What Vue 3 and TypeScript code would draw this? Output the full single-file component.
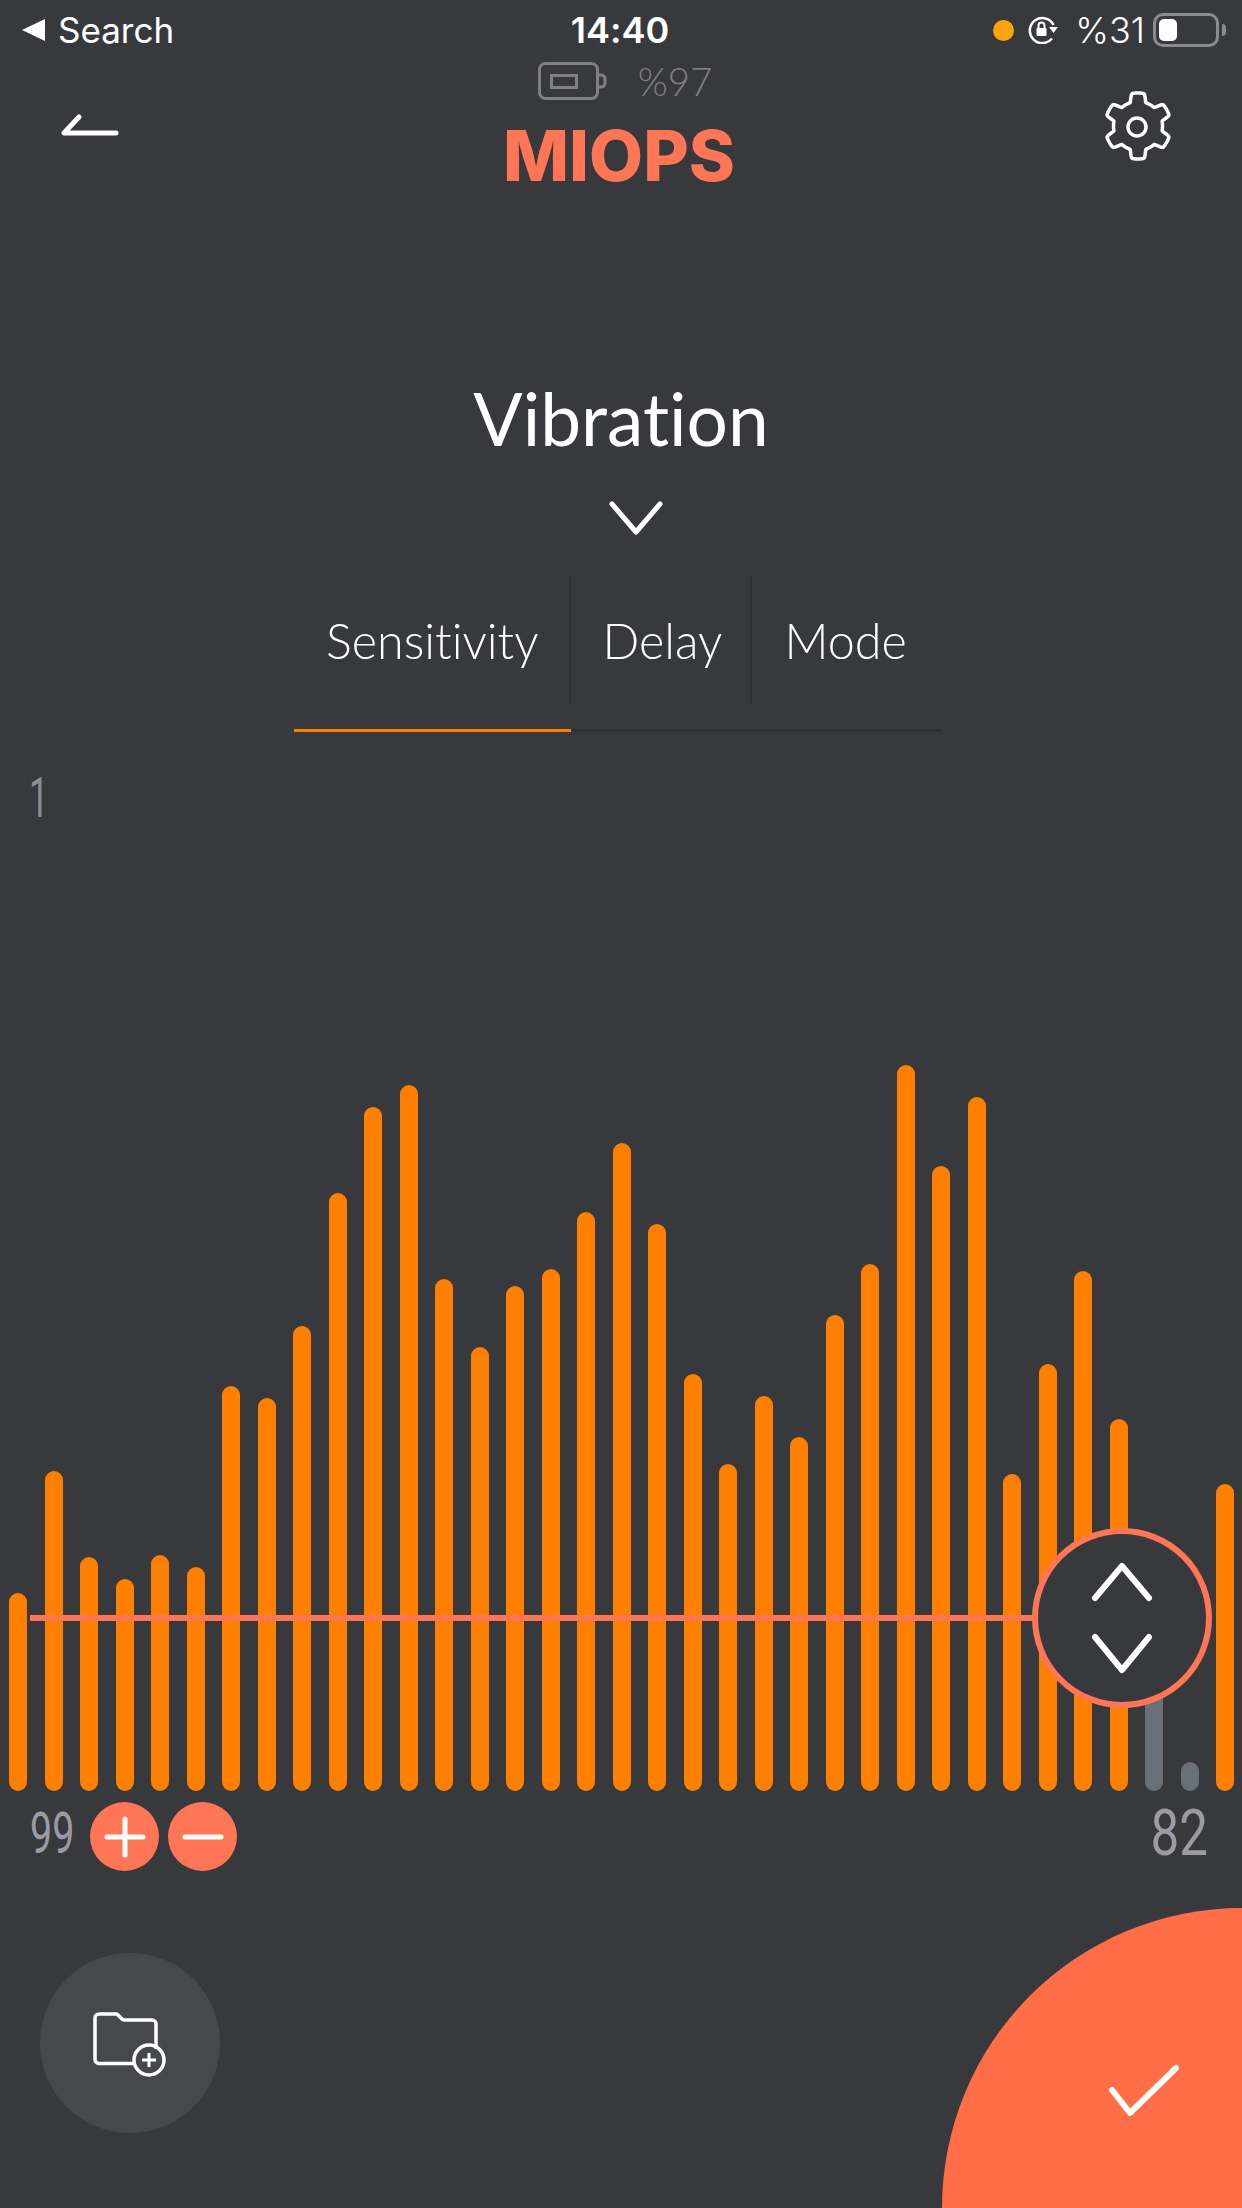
<script setup lang="ts">
const tops = [
  1593, 1471, 1557, 1579, 1555, 1567, 1386, 1398, 1326, 1193, 1107, 1085,
  1279, 1347, 1286, 1269, 1212, 1143, 1224, 1374, 1464, 1396, 1437, 1315,
  1264, 1065, 1166, 1097, 1474, 1364, 1271, 1419, 1680, 1762, 1484,
]
const chartBottom = 1791
const idleBars = [32, 33]

const bars = tops.map((top, i) => ({
  height: chartBottom - top,
  idle: idleBars.includes(i),
}))

function smoothstep(lo: number, hi: number, v: number): number {
  const t = Math.min(1, Math.max(0, (v - lo) / (hi - lo)))
  return t * t * (3 - 2 * t)
}

// six lobed cog, lobe on top
function gearPath(cx: number, cy: number): string {
  const outer = 33
  const inner = 24.5
  const steps = 240
  const pts: string[] = []
  for (let i = 0; i < steps; i++) {
    const a = (i / steps) * Math.PI * 2
    const r = inner + (outer - inner) * smoothstep(-0.45, 0.55, Math.cos(a * 6))
    const x = cx + r * Math.sin(a)
    const y = cy - r * Math.cos(a)
    pts.push(`${x.toFixed(1)} ${y.toFixed(1)}`)
  }
  return `M${pts.join('L')}Z`
}
const gear = gearPath(36, 36)
</script>

<template>
  <div class="screen">
    <div class="status">
      <div class="status__left">
        <svg width="23" height="22" viewBox="0 0 23 22"><path d="M23 0v22L0 11z" fill="#fff" /></svg>
        <span>Search</span>
      </div>
      <div class="status__time">14:40</div>
      <div class="status__right">
        <span class="status__dot"></span>
        <svg width="31" height="28" viewBox="0 0 31 28" fill="none">
          <path d="M24 22.500A12.500 12.500 0 1 1 25.500 9" stroke="#fff" stroke-width="2.500" />
          <path d="M21 11h9l-4.500 6z" fill="#fff" />
          <rect x="8.500" y="12" width="10" height="8" rx="1" fill="#fff" />
          <path d="M10.500 12V9.500a3 3 0 0 1 6 0V12" stroke="#fff" stroke-width="2" />
        </svg>
        <span class="status__pct">%31</span>
        <div class="status__battery"><i></i></div>
        <span class="status__nub"></span>
      </div>
    </div>

    <div class="header">
      <svg class="header__back" width="60" height="26" viewBox="0 0 60 26" fill="none">
        <path d="M19 3L4 19h52" stroke="#fff" stroke-width="5" stroke-linecap="round" stroke-linejoin="round" />
      </svg>
      <div class="header__center">
        <div class="device">
          <svg width="69" height="38" viewBox="0 0 69 38" fill="none" stroke="#808080" stroke-width="3">
            <rect x="1.500" y="1.500" width="58" height="35" rx="6" />
            <rect x="13.500" y="13.500" width="25" height="12" />
            <path d="M60 13h3a4 4 0 0 1 4 4v4a4 4 0 0 1-4 4h-3" />
          </svg>
          <span>%97</span>
        </div>
        <div class="logo">MIOPS</div>
      </div>
      <svg class="header__gear" width="72" height="72" viewBox="0 0 72 72" fill="none" stroke="#fff" stroke-width="3.500">
        <path :d="gear" stroke-linejoin="round" />
        <circle cx="35" cy="37" r="9" />
      </svg>
    </div>

    <h1 class="title">Vibration</h1>
    <svg class="title__chevron" width="56" height="36" viewBox="0 0 56 36" fill="none">
      <path d="M4 4l24 28L52 4" stroke="#fff" stroke-width="5" stroke-linecap="round" stroke-linejoin="round" />
    </svg>

    <div class="tabs">
      <div class="tab tab--active">Sensitivity</div>
      <div class="tab">Delay</div>
      <div class="tab">Mode</div>
    </div>

    <div class="axis-top">1</div>

    <div class="chart">
      <div
        v-for="(bar, i) in bars"
        :key="i"
        class="bar"
        :class="{ 'bar--idle': bar.idle }"
        :style="{ height: bar.height + 'px' }"
      ></div>
      <div class="slider-line"></div>
      <div class="knob">
        <svg width="70" height="120" viewBox="0 0 70 120" fill="none" stroke="#fff" stroke-width="6" stroke-linecap="round" stroke-linejoin="round">
          <path d="M8 40L35 8l27 32" />
          <path d="M8 79l27 33 27-33" />
        </svg>
      </div>
    </div>

    <div class="axis">
      <div class="axis__left">
        <span class="num num--small">99</span>
        <button class="round-btn">
          <svg width="44" height="44" viewBox="0 0 44 44" stroke="#fff" stroke-width="5" stroke-linecap="round">
            <path d="M22 4v36M4 22h36" />
          </svg>
        </button>
        <button class="round-btn">
          <svg width="44" height="44" viewBox="0 0 44 44" stroke="#fff" stroke-width="5" stroke-linecap="round">
            <path d="M4 22h36" />
          </svg>
        </button>
      </div>
      <span class="num">82</span>
    </div>

    <div class="footer">
      <button class="folder-btn">
        <svg width="74" height="66" viewBox="0 0 74 66" fill="none" stroke="#fff">
          <path d="M40 51.500H6a4 4 0 0 1-4-4V6a4 4 0 0 1 4-4h17a3 3 0 0 1 2 1l4 4a3 3 0 0 0 2 1h28a4 4 0 0 1 4 4v25" stroke-width="3.500" />
          <circle cx="56" cy="48" r="15" stroke-width="3.500" />
          <path d="M56 41v14M49 48h14" stroke-width="3" />
        </svg>
      </button>
      <div class="confirm">
        <svg width="76" height="58" viewBox="0 0 76 58" fill="none">
          <path d="M5 26l18 23L69 4" stroke="#fff" stroke-width="6" stroke-linecap="round" stroke-linejoin="round" />
        </svg>
      </div>
    </div>
  </div>
</template>

<style scoped>
.screen {
  width: 1242px;
  height: 2208px;
  background: #38393d;
  display: flex;
  flex-direction: column;
  overflow: hidden;
  font-family: Lato, "Noto Sans", sans-serif;
  font-variant-ligatures: none;
  color: #fff;
}

.status {
  height: 60px;
  display: grid;
  grid-template-columns: 1fr auto 1fr;
  align-items: center;
  padding: 0 16px 0 22px;
  font-family: Inter, "Liberation Sans", sans-serif;
  font-size: 35px;
}
.status__left {
  display: flex;
  align-items: center;
  gap: 13px;
}
.status__time {
  font-weight: 600;
  font-size: 36px;
  margin-right: 8px;
}
.status__right {
  display: flex;
  align-items: center;
  justify-content: flex-end;
}
.status__dot {
  width: 21px;
  height: 21px;
  border-radius: 50%;
  background: #ffa30d;
  margin-right: 14px;
}
.status__pct {
  margin: 0 8px 0 16px;
  font-size: 36px;
  font-weight: 300;
}
.status__battery {
  width: 66px;
  height: 34px;
  box-sizing: border-box;
  border: 3px solid #8b8c8e;
  border-radius: 10px;
  padding: 3px;
}
.status__battery i {
  display: block;
  width: 18px;
  height: 22px;
  background: #fff;
  border-radius: 5px;
}
.status__nub {
  width: 4px;
  height: 12px;
  margin-left: 3px;
  background: #8b8c8e;
  border-radius: 0 6px 6px 0;
}

.header {
  height: 130px;
  display: flex;
  justify-content: space-between;
  align-items: flex-start;
  padding: 0 68px 0 60px;
}
.header__back {
  margin-top: 54px;
}
.header__gear {
  margin-top: 30px;
}
.header__center {
  display: flex;
  flex-direction: column;
  align-items: center;
  margin-left: 16px;
}
.device {
  display: flex;
  align-items: center;
  gap: 31px;
  height: 42px;
  margin-left: 12px;
  color: #7f7f83;
  font-size: 38.5px;
  font-weight: 300;
}
.logo {
  font-family: Inter, Lato, sans-serif;
  font-size: 70px;
  font-weight: 800;
  line-height: 72px;
  margin-top: 18px;
  color: #ff7656;
}

.title {
  margin: 186px 0 0;
  text-align: center;
  font-size: 73px;
  font-weight: 400;
  line-height: 84px;
}
.title__chevron {
  display: block;
  margin: 40px 0 0 608px;
}

.tabs {
  display: flex;
  align-self: flex-start;
  margin: 40px 0 0 294px;
  width: 648px;
  border-bottom: 3px solid #2f3034;
  height: 153px;
  font-size: 48.5px;
  font-weight: 300;
}
.tab {
  height: 128px;
  padding: 0 28px 0 32px;
  display: flex;
  align-items: center;
  border-right: 2px solid #303135;
}
.tab:last-child {
  border-right: none;
}
.tab--active {
  position: relative;
  padding-right: 30px;
}
.tab--active::after {
  content: "";
  position: absolute;
  left: 0;
  right: -2px;
  top: 153px;
  height: 3px;
  background: #ff8000;
}

.axis-top {
  margin: 36px 0 0 29px;
  height: 60px;
  line-height: 60px;
  font-family: Roboto, sans-serif;
  font-size: 56px;
  color: #8e8e98;
  transform: scaleX(0.62);
  transform-origin: left center;
}

.chart {
  position: relative;
  height: 963px;
  display: flex;
  justify-content: space-between;
  align-items: flex-end;
  padding: 0 8px 0 9px;
}
.bar {
  width: 18px;
  background: #ff8000;
  border-radius: 9px;
}
.bar--idle {
  background: #687078;
}
.slider-line {
  position: absolute;
  left: 30px;
  width: 1010px;
  bottom: 170px;
  height: 6px;
  background: #ff7656;
}
.knob {
  position: absolute;
  left: 1032px;
  bottom: 83px;
  width: 180px;
  height: 180px;
  box-sizing: border-box;
  border: 6px solid #ff7656;
  border-radius: 50%;
  background: #38393d;
  display: flex;
  align-items: center;
  justify-content: center;
}

.axis {
  height: 117px;
  box-sizing: border-box;
  display: flex;
  justify-content: space-between;
  align-items: flex-start;
  padding: 11px 34px 0 30px;
}
.axis__left {
  display: flex;
  align-items: flex-start;
  gap: 9px;
}
.num {
  font-family: Roboto, sans-serif;
  font-size: 64px;
  line-height: 64px;
  color: #9b9aa5;
  margin-top: 0;
  transform: scaleX(0.8);
  transform-origin: right center;
}
.num--small {
  font-size: 58px;
  line-height: 58px;
  margin-top: 2px;
  width: 51px;
  transform: scaleX(0.68);
  transform-origin: left center;
}
.round-btn {
  width: 69px;
  height: 69px;
  border: none;
  padding: 0;
  border-radius: 50%;
  background: #ff7656;
  display: flex;
  align-items: center;
  justify-content: center;
}

.footer {
  height: 300px;
  display: flex;
  justify-content: space-between;
  align-items: flex-start;
  padding-left: 40px;
}
.folder-btn {
  width: 180px;
  height: 180px;
  margin-top: 45px;
  border: none;
  padding: 3px 0 0 0;
  border-radius: 50%;
  background: #47484c;
  display: flex;
  align-items: center;
  justify-content: center;
}
.confirm {
  width: 300px;
  height: 300px;
  background: #ff6e47;
  border-top-left-radius: 100%;
  box-sizing: border-box;
  padding: 156px 0 0 165px;
}
</style>

<style>
html,
body {
  margin: 0;
  background: #38393d;
}
</style>
